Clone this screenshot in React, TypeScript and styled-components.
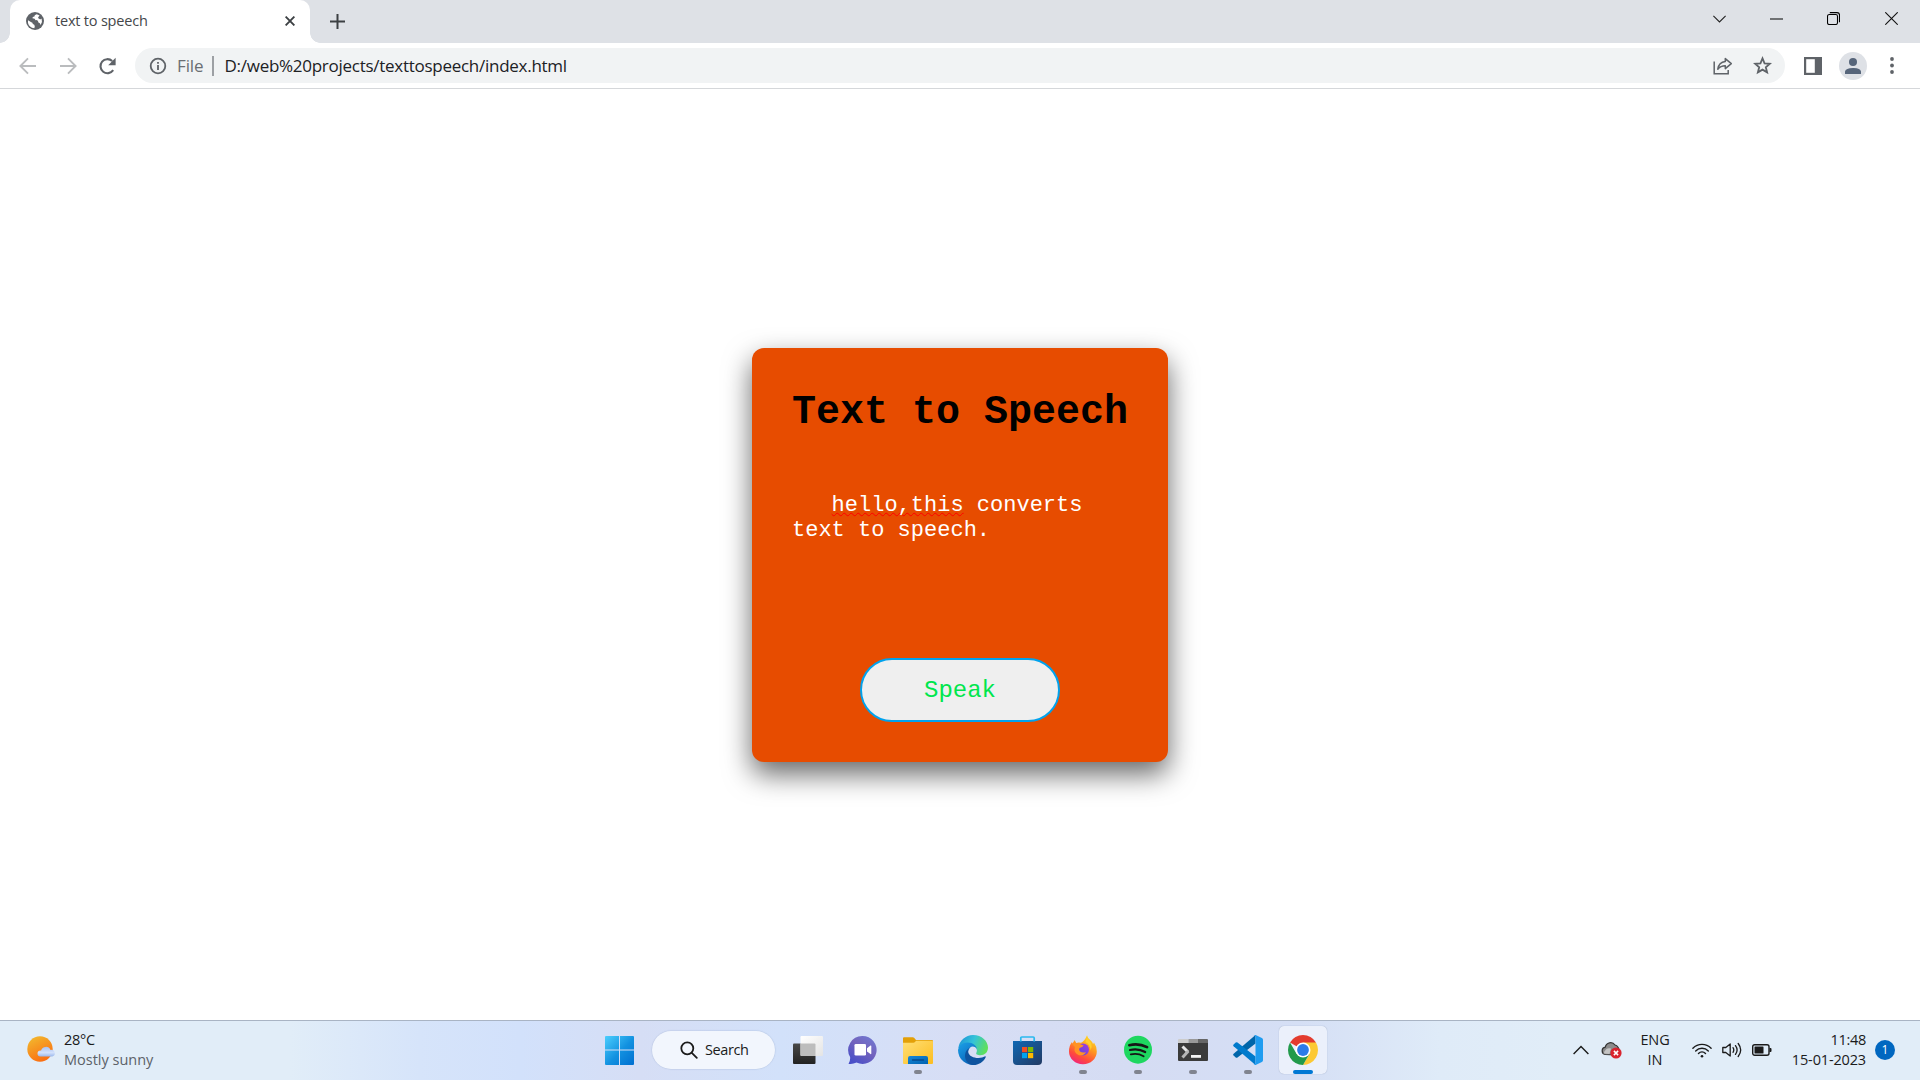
import React from 'react';
import styled, { createGlobalStyle } from 'styled-components';

const GlobalStyle = createGlobalStyle`
  html, body { margin: 0; padding: 0; background: #fff; overflow: hidden; }
  * { box-sizing: border-box; }
  svg { display: block; flex: none; }
`;

const Screen = styled.div`
  width: 1920px;
  height: 1080px;
  display: flex;
  flex-direction: column;
  font-family: 'Open Sans', 'Noto Sans', sans-serif;
  color: #1b1b1b;
  overflow: hidden;
`;

/* ---------- browser chrome ---------- */

const TabStrip = styled.div`
  height: 43px;
  flex: none;
  display: flex;
  background: #dee1e6;
`;

const TabCurve = styled.div<{ $side: 'left' | 'right' }>`
  width: 10px;
  height: 43px;
  background: radial-gradient(circle at ${(p) => (p.$side === 'left' ? '0' : '10px')} 33px, transparent 9.5px, #fff 10px) 0 0 / 10px 43px no-repeat;
  clip-path: inset(33px 0 0 0);
`;

const Tab = styled.div`
  width: 300px;
  height: 43px;
  display: flex;
  align-items: center;
  padding: 0 15px 1px 16px;
  background: #fff;
  border-radius: 10px 10px 0 0;
`;

const TabTitle = styled.span`
  flex: 1;
  margin-left: 11px;
  font-size: 14.5px;
  line-height: 20px;
  letter-spacing: -0.2px;
  color: #45474a;
  white-space: nowrap;
`;

const NewTab = styled.div`
  display: flex;
  align-items: center;
  margin-left: 10px;
`;

const WindowButtons = styled.div`
  margin-left: auto;
  display: flex;
  align-items: center;
  height: 37px;
`;

const WindowButton = styled.div<{ $width: number }>`
  width: ${(p) => p.$width}px;
  display: flex;
  justify-content: center;
`;

const Toolbar = styled.div`
  height: 46px;
  flex: none;
  display: flex;
  align-items: center;
  border-bottom: 1px solid #d5d7da;
  background: #fff;
`;

const NavButtons = styled.div`
  width: 135px;
  display: flex;
  align-items: center;
  gap: 20px;
  padding-left: 18px;
`;

const Omnibox = styled.div`
  width: 1650px;
  height: 35px;
  display: flex;
  align-items: center;
  padding: 0 13px 0 14px;
  border-radius: 18px;
  background: #f1f3f4;
`;

const Scheme = styled.span`
  margin: 1px 0 0 10px;
  font-size: 17px;
  letter-spacing: -0.1px;
  line-height: 24px;
  color: #6a6e73;
`;

const SchemeDivider = styled.div`
  width: 2px;
  height: 20px;
  margin: 0 11px 0 8px;
  background: #9da0a4;
`;

const Url = styled.span`
  flex: 1;
  margin-top: 1px;
  font-size: 17px;
  letter-spacing: -0.27px;
  line-height: 24px;
  color: #202124;
`;

const OmniActions = styled.div`
  display: flex;
  align-items: center;
  gap: 20px;
`;

const ToolbarActions = styled.div`
  display: flex;
  align-items: center;
  margin-left: 19px;
`;

const Avatar = styled.div`
  width: 28px;
  height: 28px;
  margin: 0 23px 0 17px;
  display: flex;
  align-items: center;
  justify-content: center;
  border-radius: 50%;
  background: #dee1e6;
`;

/* ---------- page ---------- */

const Page = styled.main`
  height: 931px;
  flex: none;
  display: flex;
  justify-content: center;
  align-items: flex-start;
  padding-top: 259px;
  background: #fff;
`;

const Card = styled.section`
  width: 416px;
  height: 414px;
  display: flex;
  flex-direction: column;
  padding: 42px 40px 40px;
  border-radius: 12px;
  background: #e74c00;
  box-shadow: 0 12px 28px rgba(0, 0, 0, 0.6);
  font-family: 'Liberation Mono', 'Courier New', monospace;
`;

const Heading = styled.h1`
  margin: 0;
  font-size: 40px;
  line-height: 45px;
  font-weight: 700;
  color: #000;
  white-space: nowrap;
`;

const Message = styled.div`
  margin-top: 58px;
  height: 165px;
  font-size: 22px;
  line-height: 25px;
  color: #fff;
  white-space: pre-wrap;
`;

const Misspelled = styled.span`
  text-decoration: underline wavy #ff0000 1px;
  text-decoration-skip-ink: none;
  text-underline-offset: 1px;
`;

const SpeakButton = styled.button`
  width: 200px;
  height: 64px;
  flex: none;
  align-self: center;
  padding: 0;
  border: 2px solid #00a2ed;
  border-radius: 32px;
  background: #efefef;
  font-family: inherit;
  font-size: 24px;
  color: #00e64d;
`;

/* ---------- taskbar ---------- */

const Taskbar = styled.footer`
  height: 60px;
  flex: none;
  display: flex;
  align-items: center;
  padding-bottom: 1px;
  border-top: 1px solid #a9b4c4;
  background: linear-gradient(90deg, #e1edf8 0, #e1edf8 290px, #d6e4fa 420px, #d2e1fb 520px, #d6def5 640px, #d2e1fa 780px, #d7def5 960px, #d5dcf3 1130px, #d5dff5 1300px, #dfebf8 1440px, #e1edf8 1560px, #e1edf8 100%);
`;

const Weather = styled.div`
  width: 595px;
  display: flex;
  align-items: center;
  padding: 0 0 1px 27px;
`;

const WeatherText = styled.div`
  margin-left: 8px;
  display: flex;
  flex-direction: column;
`;

const Line = styled.span<{ $tone?: string; $spacing?: number }>`
  font-size: 14.5px;
  line-height: 20px;
  letter-spacing: ${(p) => p.$spacing ?? 0}px;
  color: ${(p) => p.$tone ?? '#1b1b1b'};
  white-space: nowrap;
`;

const Apps = styled.nav`
  display: flex;
  align-items: center;
  gap: 7px;
  height: 48px;
`;

const AppTile = styled.div<{ $active?: boolean }>`
  width: 48px;
  height: 48px;
  display: grid;
  grid-template-rows: 39px 4px;
  justify-items: center;
  align-items: end;
  border-radius: 5px;
  background: ${(p) => (p.$active ? '#ebf0fb' : 'transparent')};
  box-shadow: ${(p) => (p.$active ? '0 0 1px rgba(60, 80, 120, 0.45)' : 'none')};
  row-gap: 5px;
`;

const Indicator = styled.div<{ $active?: boolean }>`
  width: ${(p) => (p.$active ? 20 : 8)}px;
  height: 4px;
  border-radius: 2px;
  background: ${(p) => (p.$active ? '#0078d4' : '#80848f')};
`;

const SearchPill = styled.div`
  width: 123px;
  height: 38px;
  margin: 0 2px;
  display: flex;
  align-items: center;
  padding: 0 0 0 28px;
  gap: 7px;
  border-radius: 19px;
  background: #f2f6fd;
  box-shadow: 0 0 1px 0.5px rgba(130, 150, 190, 0.3);
`;

const Tray = styled.div`
  margin-left: auto;
  display: flex;
  align-items: center;
`;

const TraySymbols = styled.div`
  display: flex;
  align-items: center;
  gap: 12px;
`;

const Language = styled.div`
  width: 28px;
  margin: 0 23px 0 19px;
  display: flex;
  flex-direction: column;
  align-items: center;
`;

const StatusIcons = styled.div`
  display: flex;
  gap: 10px;
`;

const Clock = styled.div`
  width: 80px;
  margin: 0 9px 1px 14px;
  display: flex;
  flex-direction: column;
  align-items: flex-end;
`;

const Badge = styled.div`
  width: 20px;
  height: 20px;
  margin-right: 25px;
  border-radius: 50%;
  background: #0067c0;
  color: #fff;
  font-size: 12px;
  line-height: 19px;
  text-align: center;
`;

/* ---------- icons ---------- */

const Globe = () => (
  <svg width="18" height="18" viewBox="0 0 18 18">
    <circle cx="9" cy="9" r="9" fill="#5f6368" />
    <path d="M2 8.2 L5.3 10.2 Q6.8 10.5 6.8 12 Q8.8 12.3 8.8 14.5 L8.3 16.2 Q3 15.6 2 11Z" fill="#fff" />
    <path d="M10.8 2.2 Q8 3 8.6 4.6 Q6.6 4.4 6.3 6.3 Q9.2 6.2 9.5 8.2 Q12.4 7.6 12.4 10.6 Q14.2 10.8 14.6 12.9 Q16.8 9.8 15.6 6.4 Q14 8 12.9 6.6 Q11 6 13.6 3.5Z" fill="#fff" />
  </svg>
);

const CloseX = () => (
  <svg width="10" height="10" viewBox="0 0 10 10" stroke="#3c4043" strokeWidth="1.9">
    <path d="M.6.6 9.4 9.4M9.4.6.6 9.4" />
  </svg>
);

const Plus = () => (
  <svg width="15" height="15" viewBox="0 0 15 15" stroke="#3c4043" strokeWidth="2">
    <path d="M7.5 0v15M0 7.5h15" />
  </svg>
);

const Arrow = ({ flip }: { flip?: boolean }) => (
  <svg width="20" height="18" viewBox="0 0 20 18" fill="none" stroke="#babcbe" strokeWidth="1.9">
    <path d={flip ? 'M2 9h15.5M10 1.4 17.6 9 10 16.6' : 'M18 9H2.5M10 1.4 2.4 9 10 16.6'} />
  </svg>
);

const Reload = () => (
  <svg width="20" height="18" viewBox="0 0 20 18">
    <path d="M15.2 13.2A7 7 0 1 1 14.2 4" fill="none" stroke="#5f6368" strokeWidth="2.1" />
    <path d="M17.6.8v7.4h-7.4z" fill="#5f6368" />
  </svg>
);

const Info = () => (
  <svg width="18" height="18" viewBox="0 0 18 18">
    <circle cx="9" cy="9" r="7.3" fill="none" stroke="#5f6368" strokeWidth="1.8" />
    <path d="M8.1 8h1.8v5H8.1zM8.1 5h1.8v1.8H8.1z" fill="#5f6368" />
  </svg>
);

const Share = () => (
  <svg width="20" height="18" viewBox="0 0 20 18" fill="none" stroke="#5f6368" strokeWidth="1.5">
    <path d="M1.2 4.6v12.2h14V13" />
    <path d="M12.3 1.6 18.3 6.6l-6 5V8.8Q7.5 8.8 4.8 12.2 5.8 5.3 12.3 4.6Z" strokeLinejoin="round" />
  </svg>
);

const Star = () => (
  <svg width="19" height="19" viewBox="0 0 24 24" fill="none" stroke="#5f6368" strokeWidth="2.3" strokeLinejoin="miter">
    <path d="m12 3 2.6 6.2 6.7.6-5.1 4.4 1.6 6.5-5.8-3.5-5.8 3.5 1.6-6.5-5.1-4.4 6.7-.6z" />
  </svg>
);

const SidePanel = () => (
  <svg width="18" height="18" viewBox="0 0 18 18">
    <path d="M0 0h18v18H0z" fill="#5f6368" />
    <path d="M2.2 2.2h8.6v13.6H2.2z" fill="#fff" />
  </svg>
);

const Person = () => (
  <svg width="16" height="16" viewBox="0 0 16 16" fill="#56657a">
    <circle cx="8" cy="4" r="4" />
    <path d="M0 16v-2.4Q.6 10.2 8 10t8 3.6V16z" />
  </svg>
);

const Dots = () => (
  <svg width="4" height="17" viewBox="0 0 4 17" fill="#5f6368">
    <circle cx="2" cy="2" r="1.9" />
    <circle cx="2" cy="8.5" r="1.9" />
    <circle cx="2" cy="15" r="1.9" />
  </svg>
);

const Sunny = () => (
  <svg width="29" height="27" viewBox="0 0 29 27">
    <defs>
      <linearGradient id="sun" x1=".2" y1="0" x2=".7" y2="1">
        <stop offset="0" stopColor="#f2b82e" />
        <stop offset="1" stopColor="#fb6a10" />
      </linearGradient>
      <linearGradient id="cloud" x1="0" y1="0" x2="0" y2="1">
        <stop offset="0" stopColor="#a9c3f3" />
        <stop offset=".6" stopColor="#d3e1fb" />
        <stop offset="1" stopColor="#9bb8ec" />
      </linearGradient>
    </defs>
    <circle cx="13" cy="13" r="12.7" fill="url(#sun)" />
    <path d="M13.5 20.5a3 3 0 0 1 0-6h.6a5 5 0 0 1 9.4-.6 3.4 3.4 0 0 1 1.8 6.6z" fill="url(#cloud)" />
  </svg>
);

const Windows = () => (
  <svg width="30" height="30" viewBox="0 0 30 30">
    <defs>
      <linearGradient id="win" x1="0" y1="0" x2="30" y2="30" gradientUnits="userSpaceOnUse">
        <stop offset="0" stopColor="#4fd2ff" />
        <stop offset=".55" stopColor="#1291e0" />
        <stop offset="1" stopColor="#006fd0" />
      </linearGradient>
    </defs>
    <path d="M2 1h13v13.500H1V2a1 1 0 0 1 1-1zM16 1h13a1 1 0 0 1 1 1v12.500H16zM1 15.500h14V30H2a1 1 0 0 1-1-1zM16 15.500h14V29a1 1 0 0 1-1 1H16z" fill="url(#win)" />
  </svg>
);

const SearchGlass = () => (
  <svg width="18" height="18" viewBox="0 0 18 18" fill="none" stroke="#1b1b1b" strokeWidth="1.8" strokeLinecap="round">
    <circle cx="7.3" cy="7.3" r="6" />
    <path d="m11.8 11.8 5 5" />
  </svg>
);

const TaskView = () => (
  <svg width="30" height="30" viewBox="0 0 30 30">
    <defs>
      <linearGradient id="tv" x1="0" y1="0" x2="0" y2="1">
        <stop offset="0" stopColor="#484848" />
        <stop offset="1" stopColor="#222" />
      </linearGradient>
      <linearGradient id="tvLight" x1="0" y1="0" x2="1" y2="1">
        <stop offset="0" stopColor="#fff" />
        <stop offset="1" stopColor="#e4e4e4" />
      </linearGradient>
    </defs>
    <rect y="8.5" width="22.5" height="20.5" rx="1" fill="url(#tv)" />
    <rect x="7.5" y="1" width="22.5" height="20" rx="1" fill="url(#tvLight)" />
    <path d="M7.5 8.5h14a1 1 0 0 1 1 1V21H8.5a1 1 0 0 1-1-1z" fill="#bdbdbd" />
  </svg>
);

const Chat = () => (
  <svg width="30" height="30" viewBox="0 0 30 30">
    <defs>
      <linearGradient id="chat" x1="1" y1="0" x2=".3" y2="1">
        <stop offset="0" stopColor="#6f7cd6" />
        <stop offset=".5" stopColor="#7464bd" />
        <stop offset="1" stopColor="#4a50c8" />
      </linearGradient>
    </defs>
    <path d="M14.500 1a14 14 0 1 1-6 26.600Q4.500 29.500.500 28.800 2.500 26 2.100 22A14 14 0 0 1 14.500 1z" fill="url(#chat)" />
    <rect x="6.500" y="9" width="11.500" height="11.500" rx="1.300" fill="#fff" />
    <path d="M19 13.300 22.500 10.600q.8-.5.800.5v7.500q0 1-.8.500l-3.500-2.700z" fill="#fff" />
  </svg>
);

const Folder = () => (
  <svg width="30" height="30" viewBox="0 0 30 30">
    <defs>
      <linearGradient id="fold" x1="0" y1="0" x2="1" y2="1">
        <stop offset="0" stopColor="#ffdf76" />
        <stop offset="1" stopColor="#fcbd1f" />
      </linearGradient>
      <linearGradient id="foldBlue" x1="0" y1="0" x2="1" y2="1">
        <stop offset="0" stopColor="#1687d9" />
        <stop offset="1" stopColor="#0062b0" />
      </linearGradient>
    </defs>
    <path d="M0 12V3.2a1 1 0 0 1 1-1h8.7q.8 0 1.4.6L13 5h16a1 1 0 0 1 1 1v5z" fill="#e3a008" />
    <path d="M0 7.7h10.5q.8 0 1.5-.7L13 5.7h16a1 1 0 0 1 1 1V28a1 1 0 0 1-1 1H1a1 1 0 0 1-1-1z" fill="url(#fold)" />
    <path d="M5 29v-6a2 2 0 0 1 2-2h16a2 2 0 0 1 2 2v6z" fill="url(#foldBlue)" />
    <path d="M9.5 25h11" stroke="#06498d" strokeWidth="1.3" strokeLinecap="round" />
  </svg>
);

const Edge = () => (
  <svg width="30" height="30" viewBox="0 0 30 30">
    <defs>
      <linearGradient id="edgeTop" x1="0" y1=".2" x2="1" y2=".5">
        <stop offset="0" stopColor="#1b93d8" />
        <stop offset=".5" stopColor="#35c3d8" />
        <stop offset="1" stopColor="#5fe05a" />
      </linearGradient>
      <linearGradient id="edgeLeft" x1="0" y1="0" x2=".6" y2="1">
        <stop offset="0" stopColor="#1ba1e8" />
        <stop offset="1" stopColor="#0a63b8" />
      </linearGradient>
    </defs>
    <path d="M.3 13A15 15 0 0 1 15 0c9 0 15 6.300 15 12.500 0 5-3.500 7.700-7.500 7.700-3 0-5-1.200-4.200-2.300 2-3.500-.7-7.400-5.300-7.400Q5 8 .3 13z" fill="url(#edgeTop)" />
    <path d="M0 15Q1.500 7.500 9.500 7.500c5.500 0 9.500 3.500 9.500 7.300q-1-3.300-4.500-3.300c-7 1-6 16 3.500 18.200A15 15 0 0 1 0 15z" fill="url(#edgeLeft)" />
    <path d="M13 11.900c-5 3-3.500 10.600 7.500 11.100q4 0 6.700-1.700.9 0 .5.900C25.500 27 20.500 30 15.500 30 5 29 4.500 15 13 11.900z" fill="#0f549f" />
  </svg>
);

const Store = () => (
  <svg width="30" height="30" viewBox="0 0 30 30">
    <defs>
      <linearGradient id="store" x1="0" y1="0" x2="1" y2="1">
        <stop offset="0" stopColor="#0f67b4" />
        <stop offset="1" stopColor="#223a63" />
      </linearGradient>
    </defs>
    <path d="M0 6h29v20a4 4 0 0 1-4 4H4a4 4 0 0 1-4-4z" fill="url(#store)" />
    <path d="M7.800 6.500V3a1 1 0 0 1 1-1h11.400a1 1 0 0 1 1 1v3.500" fill="none" stroke="#2bb9ee" strokeWidth="1.7" />
    <path d="M9 12h5.200v5.200H9z" fill="#f25022" />
    <path d="M15 12h5.200v5.200H15z" fill="#7fba00" />
    <path d="M9 18h5.200v5.200H9z" fill="#00a4ef" />
    <path d="M15 18h5.200v5.200H15z" fill="#ffb900" />
  </svg>
);

const Firefox = () => (
  <svg width="30" height="30" viewBox="0 0 30 30">
    <defs>
      <linearGradient id="fx" x1=".8" y1="0" x2=".3" y2="1">
        <stop offset="0" stopColor="#ffe226" />
        <stop offset=".4" stopColor="#ff9a1f" />
        <stop offset=".75" stopColor="#ff4a3c" />
        <stop offset="1" stopColor="#f0247c" />
      </linearGradient>
      <linearGradient id="fxGlobe" x1="1" y1="0" x2="0" y2="1">
        <stop offset="0" stopColor="#a43be0" />
        <stop offset="1" stopColor="#5a48d8" />
      </linearGradient>
    </defs>
    <path d="M19 .3q.6 3 3.500 5 2 1.700 2.600 3.600l.9-1.500q2.800 4 2.800 9A13.900 12.900 0 0 1 1 16.500Q1 10.500 4 7l.4 1.700L6.700 5l1.500 3q2-.9 4.800-.3Q16.500 6.500 19 .3z" fill="url(#fx)" />
    <circle cx="15" cy="14.500" r="6" fill="url(#fxGlobe)" />
    <path d="M4 8.800q5-1.800 9 .8l2.700 1q-1 1.900-4.200 2.400-1 1.600.5 3.500 3 2 6 .4-2 4.200-7 3.300Q5 17.500 7 12z" fill="#ff9325" />
    <path d="M17.500 7q5 2.500 5 8.500 2-3 .8-7L19 2.500z" fill="#ffd02c" />
  </svg>
);

const Spotify = () => (
  <svg width="30" height="30" viewBox="0 0 30 30" fill="none" stroke="#161616" strokeLinecap="round">
    <circle cx="15" cy="14.700" r="14" fill="#1ed760" stroke="none" />
    <path d="M6.300 10.200q9.500-2.400 17.800 2" strokeWidth="2.600" />
    <path d="M7 15q8.200-2 15.200 2" strokeWidth="2.200" />
    <path d="M7.800 19.400q7-1.600 12.800 1.800" strokeWidth="1.900" />
  </svg>
);

const Terminal = () => (
  <svg width="30" height="30" viewBox="0 0 30 30">
    <path d="M0 8h30v17a1 1 0 0 1-1 1H1a1 1 0 0 1-1-1z" fill="#3b3b3b" />
    <path d="M1 4h9.500v4H0V5a1 1 0 0 1 1-1z" fill="#ccc" />
    <path d="M10.500 4H20v4h-9.500z" fill="#999" />
    <path d="M20 4h9a1 1 0 0 1 1 1v3H20z" fill="#666" />
    <path d="m4.500 11.500 5.500 5.500" stroke="#e6e6e6" strokeWidth="3" />
    <path d="m10.300 15.900-5.800 6.600" stroke="#b5b5b5" strokeWidth="3" />
    <path d="M13 20h10v2.800H13z" fill="#f4f4f4" />
  </svg>
);

const VsCode = () => (
  <svg width="30" height="30" viewBox="0 0 30 30">
    <path d="M22.500 0v8.500L4.500 22.500q-1 .6-1.800 0L.6 20.600q-.9-.9 0-1.800z" fill="#0065a9" />
    <path d="M22.500 30v-8.500L4.500 7.500q-1-.6-1.800 0L.6 9.400q-.9.900 0 1.800z" fill="#007acc" />
    <path d="m22.600.1 6.300 3q1.100.5 1.100 1.700v20.400q0 1.200-1.100 1.700l-6.300 3q-1.300.3-2-.6 1.900.6 1.900-1.200V2q0-1.900-1.900-1.300.7-.8 2-.6z" fill="#1f9cf0" />
  </svg>
);

const Chrome = () => (
  <svg width="30" height="30" viewBox="0 0 30 30">
    <path d="M15 15 2.010 7.500A15 15 0 0 1 27.990 7.500z" fill="#e33b2e" />
    <path d="M15 7.500H27.990A15 15 0 0 1 15 30l6.500-11.250z" fill="#fcc934" />
    <path d="M8.500 18.750 2.010 7.500A15 15 0 0 0 15 30l6.500-11.250z" fill="#229a4b" />
    <circle cx="15" cy="15" r="7.500" fill="#fff" />
    <circle cx="15" cy="15" r="5.900" fill="#2d7be8" />
  </svg>
);

const TrayChevron = () => (
  <svg width="16" height="10" viewBox="0 0 16 10" fill="none" stroke="#1b1b1b" strokeWidth="1.400">
    <path d="M.6 9 8 1.500 15.400 9" />
  </svg>
);

const CloudError = () => (
  <svg width="21" height="18" viewBox="0 0 21 18">
    <path d="M4.200 13.500a3.700 3.700 0 0 1 .1-7.300A5.400 5.400 0 0 1 14 4q2.800.5 3.800 4L14 14z" fill="#8b8b8b" stroke="#333" strokeWidth="1.200" />
    <path d="M2.500 12.500Q5 6 10 7.500l-1.500 5.500z" fill="#c4c4c4" />
    <circle cx="15" cy="12" r="5.600" fill="#d9232e" />
    <path d="m12.900 9.900 4.200 4.200m0-4.200-4.200 4.200" stroke="#fff" strokeWidth="1.500" />
  </svg>
);

const Wifi = () => (
  <svg width="20" height="18" viewBox="0 0 20 18" fill="none" stroke="#1b1b1b" strokeWidth="1.400" strokeLinecap="round">
    <path d="M.9 7.200a12.800 12.800 0 0 1 18.200 0M3.700 9.900a8.800 8.800 0 0 1 12.600 0M6.500 12.500a5 5 0 0 1 7 0" />
    <circle cx="10" cy="15.200" r="1.300" fill="#1b1b1b" stroke="none" />
  </svg>
);

const Volume = () => (
  <svg width="20" height="18" viewBox="0 0 20 18" fill="none" stroke="#1b1b1b" strokeWidth="1.300" strokeLinecap="round" strokeLinejoin="round">
    <path d="M.8 6.500h3L8.200 3v12l-4.400-3.500h-3z" />
    <path d="M11 6.700q1.600 2.300 0 4.600M13.500 4.600q3.200 4.400 0 8.800M16.200 2.500q5 6.500 0 13" />
  </svg>
);

const Battery = () => (
  <svg width="20" height="18" viewBox="0 0 20 18">
    <rect x=".7" y="3.700" width="16.300" height="10.600" rx="2" fill="none" stroke="#1b1b1b" strokeWidth="1.400" />
    <rect x="2.500" y="5.500" width="9" height="7" rx=".6" fill="#1b1b1b" />
    <path d="M17.500 7h1a1 1 0 0 1 1 1v2a1 1 0 0 1-1 1h-1z" fill="#1b1b1b" />
  </svg>
);

const apps = [
  { name: 'taskview', icon: <TaskView />, open: false },
  { name: 'chat', icon: <Chat />, open: false },
  { name: 'explorer', icon: <Folder />, open: true },
  { name: 'edge', icon: <Edge />, open: false },
  { name: 'store', icon: <Store />, open: false },
  { name: 'firefox', icon: <Firefox />, open: true },
  { name: 'spotify', icon: <Spotify />, open: true },
  { name: 'terminal', icon: <Terminal />, open: true },
  { name: 'vscode', icon: <VsCode />, open: true },
  { name: 'chrome', icon: <Chrome />, open: true, active: true },
];

export default function App() {
  return (
    <Screen>
      <GlobalStyle />
      <TabStrip>
        <TabCurve $side="left" />
        <Tab>
          <Globe />
          <TabTitle>text to speech</TabTitle>
          <CloseX />
        </Tab>
        <TabCurve $side="right" />
        <NewTab>
          <Plus />
        </NewTab>
        <WindowButtons>
          <WindowButton $width={57}>
            <svg width="13" height="8" viewBox="0 0 13 8" fill="none" stroke="#222" strokeWidth="1.100">
              <path d="m.4.8 6.100 6.100L12.600.8" />
            </svg>
          </WindowButton>
          <WindowButton $width={57}>
            <svg width="13" height="2" viewBox="0 0 13 2">
              <path d="M0 .5h13v1H0z" fill="#000" />
            </svg>
          </WindowButton>
          <WindowButton $width={57}>
            <svg width="13" height="13" viewBox="0 0 13 13" fill="none" stroke="#000" strokeWidth="1.100">
              <rect x=".5" y="2.500" width="10" height="10" rx="1.800" />
              <path d="M2.800.6H10q2.500 0 2.500 2.500v7.200" />
            </svg>
          </WindowButton>
          <WindowButton $width={58}>
            <svg width="13" height="13" viewBox="0 0 13 13" stroke="#111" strokeWidth="1.100">
              <path d="m.3.300 12.400 12.400M12.700.3.300 12.700" />
            </svg>
          </WindowButton>
        </WindowButtons>
      </TabStrip>

      <Toolbar>
        <NavButtons>
          <Arrow />
          <Arrow flip />
          <Reload />
        </NavButtons>
        <Omnibox>
          <Info />
          <Scheme>File</Scheme>
          <SchemeDivider />
          <Url>D:/web%20projects/texttospeech/index.html</Url>
          <OmniActions>
            <Share />
            <Star />
          </OmniActions>
        </Omnibox>
        <ToolbarActions>
          <SidePanel />
          <Avatar>
            <Person />
          </Avatar>
          <Dots />
        </ToolbarActions>
      </Toolbar>

      <Page>
        <Card>
          <Heading>Text to Speech</Heading>
          <Message>
            {'   '}
            <Misspelled>hello,this</Misspelled>
            {' converts\ntext to speech.'}
          </Message>
          <SpeakButton>Speak</SpeakButton>
        </Card>
      </Page>

      <Taskbar>
        <Weather>
          <Sunny />
          <WeatherText>
            <Line $spacing={-0.3}>28°C</Line>
            <Line $tone="#5c6268" $spacing={0}>Mostly sunny</Line>
          </WeatherText>
        </Weather>
        <Apps>
          <AppTile>
            <Windows />
          </AppTile>
          <SearchPill>
            <SearchGlass />
            <Line $spacing={-0.4}>Search</Line>
          </SearchPill>
          {apps.map((app) => (
            <AppTile key={app.name} $active={app.active}>
              {app.icon}
              {app.open && <Indicator $active={app.active} />}
            </AppTile>
          ))}
        </Apps>
        <Tray>
          <TraySymbols>
            <TrayChevron />
            <CloudError />
          </TraySymbols>
          <Language>
            <Line $spacing={-0.1}>ENG</Line>
            <Line>IN</Line>
          </Language>
          <StatusIcons>
            <Wifi />
            <Volume />
            <Battery />
          </StatusIcons>
          <Clock>
            <Line $spacing={-0.3}>11:48</Line>
            <Line $spacing={-0.15}>15-01-2023</Line>
          </Clock>
          <Badge>1</Badge>
        </Tray>
      </Taskbar>
    </Screen>
  );
}
